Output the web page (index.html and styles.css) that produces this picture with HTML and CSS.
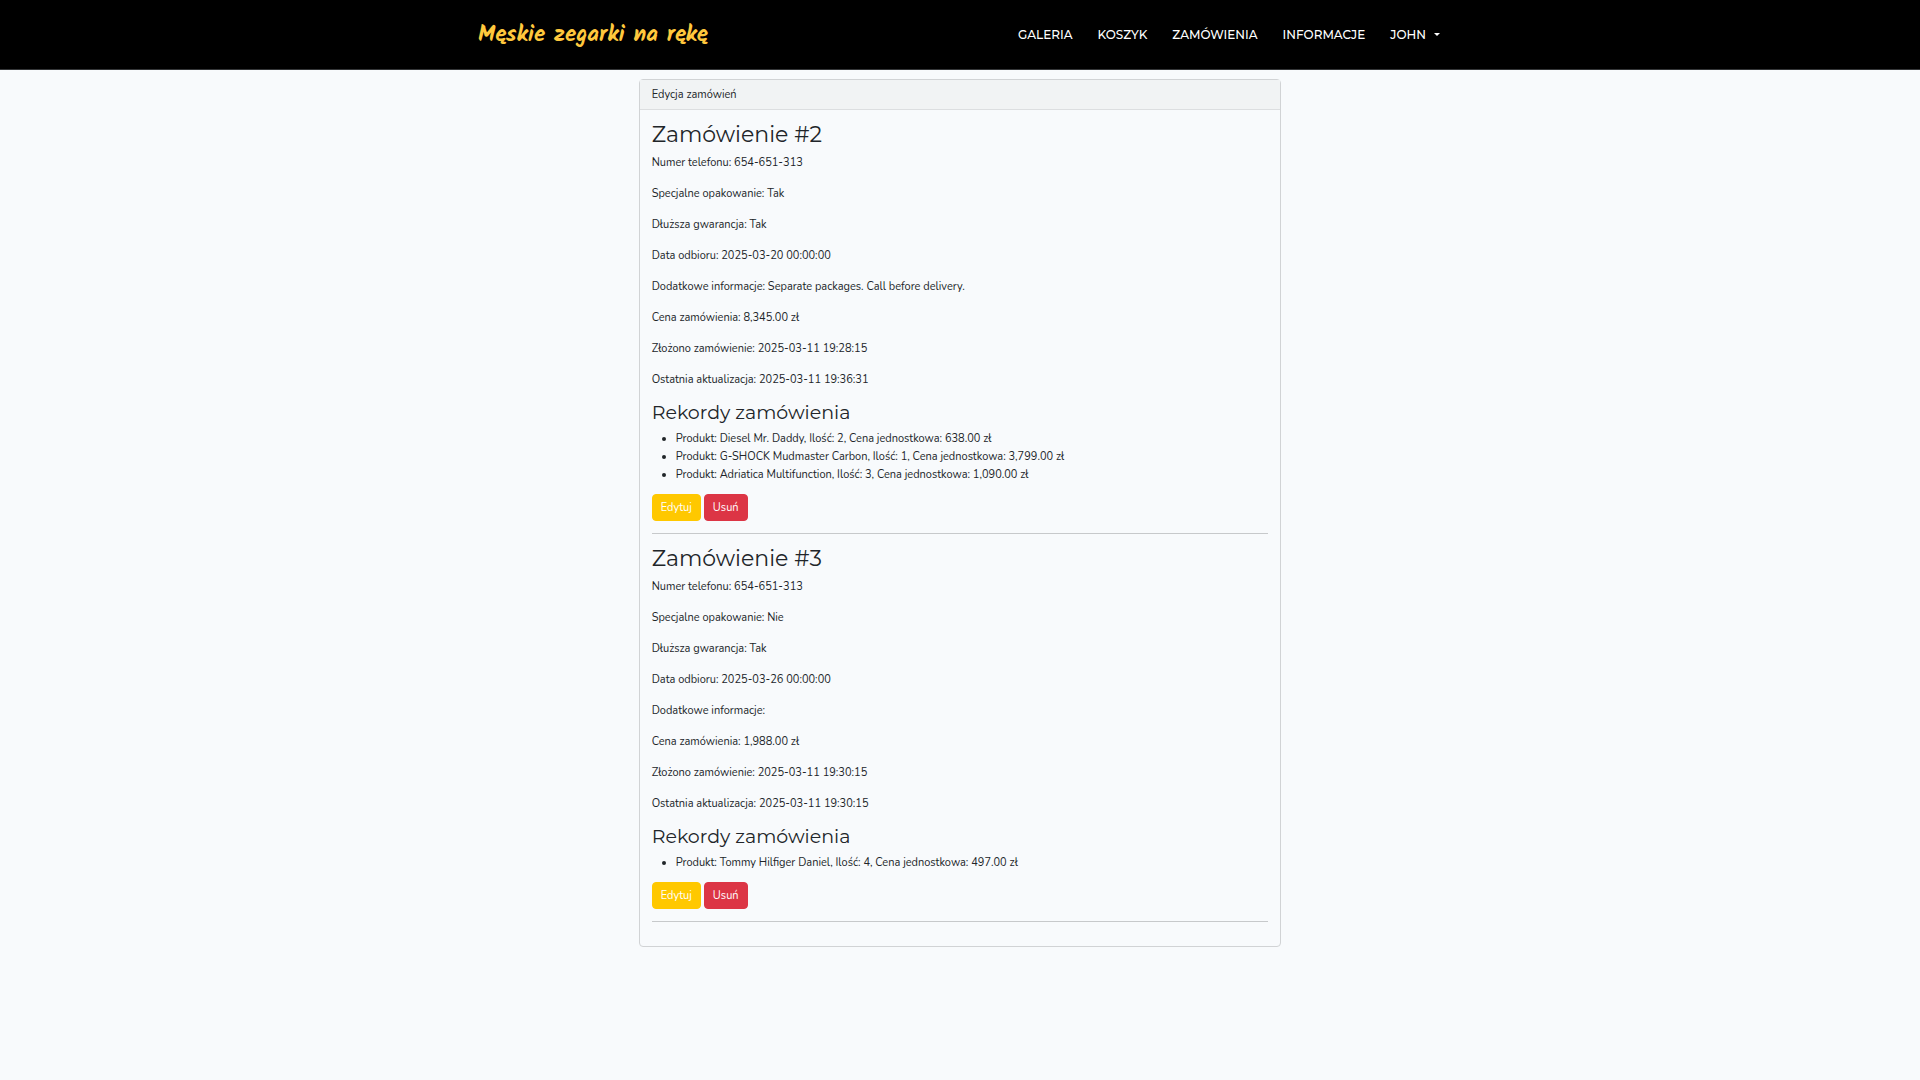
FILE: index.html
```html
<!DOCTYPE html>
<html lang="pl">
<head>
<meta charset="utf-8">
<meta name="viewport" content="width=device-width, initial-scale=1">
<title>Męskie zegarki na rękę</title>
<link rel="stylesheet" href="styles.css">
</head>
<body>
<header class="navbar">
  <nav class="container navbar-inner">
    <a class="brand" href="#">Męskie zegarki na rękę</a>
    <ul class="nav-links">
      <li><a href="#">GALERIA</a></li>
      <li><a href="#">KOSZYK</a></li>
      <li><a href="#">ZAMÓWIENIA</a></li>
      <li><a href="#">INFORMACJE</a></li>
      <li><a class="dropdown" href="#">JOHN</a></li>
    </ul>
  </nav>
</header>
<main class="container">
  <section class="card">
    <div class="card-header">Edycja zamówień</div>
    <div class="card-body">
      <article>
        <h2>Zamówienie #2</h2>
        <p>Numer telefonu: 654-651-313</p>
        <p>Specjalne opakowanie: Tak</p>
        <p>Dłuższa gwarancja: Tak</p>
        <p>Data odbioru: 2025-03-20 00:00:00</p>
        <p>Dodatkowe informacje: Separate packages. Call before delivery.</p>
        <p>Cena zamówienia: 8,345.00 zł</p>
        <p>Złożono zamówienie: 2025-03-11 19:28:15</p>
        <p>Ostatnia aktualizacja: 2025-03-11 19:36:31</p>
        <h3>Rekordy zamówienia</h3>
        <ul class="records">
          <li>Produkt: Diesel Mr. Daddy, Ilość: 2, Cena jednostkowa: 638.00 zł</li>
          <li>Produkt: G-SHOCK Mudmaster Carbon, Ilość: 1, Cena jednostkowa: 3,799.00 zł</li>
          <li>Produkt: Adriatica Multifunction, Ilość: 3, Cena jednostkowa: 1,090.00 zł</li>
        </ul>
        <div class="actions">
          <button class="btn btn-edit" type="button">Edytuj</button>
          <button class="btn btn-delete" type="button">Usuń</button>
        </div>
      </article>
      <hr>
      <article>
        <h2>Zamówienie #3</h2>
        <p>Numer telefonu: 654-651-313</p>
        <p>Specjalne opakowanie: Nie</p>
        <p>Dłuższa gwarancja: Tak</p>
        <p>Data odbioru: 2025-03-26 00:00:00</p>
        <p>Dodatkowe informacje:</p>
        <p>Cena zamówienia: 1,988.00 zł</p>
        <p>Złożono zamówienie: 2025-03-11 19:30:15</p>
        <p>Ostatnia aktualizacja: 2025-03-11 19:30:15</p>
        <h3>Rekordy zamówienia</h3>
        <ul class="records">
          <li>Produkt: Tommy Hilfiger Daniel, Ilość: 4, Cena jednostkowa: 497.00 zł</li>
        </ul>
        <div class="actions">
          <button class="btn btn-edit" type="button">Edytuj</button>
          <button class="btn btn-delete" type="button">Usuń</button>
        </div>
      </article>
      <hr>
    </div>
  </section>
</main>
</body>
</html>
```
FILE: styles.css
```css
* {
  box-sizing: border-box;
}

body {
  margin: 0;
  background: #f8fafc;
  color: #212529;
  font-family: Nunito, "Noto Sans", sans-serif;
  font-size: 11px;
  line-height: 18px;
}

.container {
  width: 100%;
  max-width: 964px;
  margin: 0 auto;
}

.navbar {
  background: #000;
  border-bottom: 1px solid #343638;
}

.navbar-inner {
  display: flex;
  align-items: center;
  justify-content: space-between;
  min-height: 69px;
  padding-right: 2px;
}

.brand {
  color: #ffc83d;
  font-family: Kalam, Lato, cursive;
  font-size: 23px;
  font-weight: 700;
  line-height: 36px;
  text-decoration: none;
}

.nav-links {
  display: flex;
  gap: 25px;
  margin: 0;
  padding: 0;
  list-style: none;
  font-family: Montserrat, Inter, sans-serif;
  font-size: 12px;
  font-weight: 500;
}

.nav-links a {
  color: #fff;
  text-decoration: none;
}

.dropdown {
  display: flex;
  align-items: center;
  gap: 8px;
}

.dropdown::after {
  content: "";
  border-top: 3px solid #fff;
  border-right: 3px solid transparent;
  border-left: 3px solid transparent;
}

main {
  padding: 9px 0;
}

.card {
  width: 66.6667%;
  min-width: 320px;
  margin: 0 auto;
  border: 1px solid #d1d3d5;
  border-radius: 4px;
}

.card-header {
  padding: 6px 12px;
  background: #f1f3f4;
  border-bottom: 1px solid #dcdee0;
  line-height: 17px;
}

.card-body {
  padding: 12px;
}

h2,
h3 {
  margin: 0 0 6px;
  font-family: Montserrat, Inter, sans-serif;
  font-weight: 400;
}

h2 {
  font-size: 22px;
  line-height: 26px;
}

h3 {
  font-size: 19px;
  line-height: 22px;
}

p {
  margin: 0 0 13px;
}

.records {
  margin: 0 0 10px;
  padding-left: 24px;
}

.actions {
  display: flex;
  gap: 3px;
}

.btn {
  padding: 4px 8px;
  border: 1px solid;
  border-radius: 4px;
  color: #fff;
  font: inherit;
  line-height: 17px;
}

.btn-edit {
  background: #ffc800;
  border-color: #ffc800;
}

.btn-delete {
  background: #dc3545;
  border-color: #dc3545;
}

hr {
  height: 1px;
  margin: 12px 0;
  border: 0;
  background: #c7c9cb;
}
```
